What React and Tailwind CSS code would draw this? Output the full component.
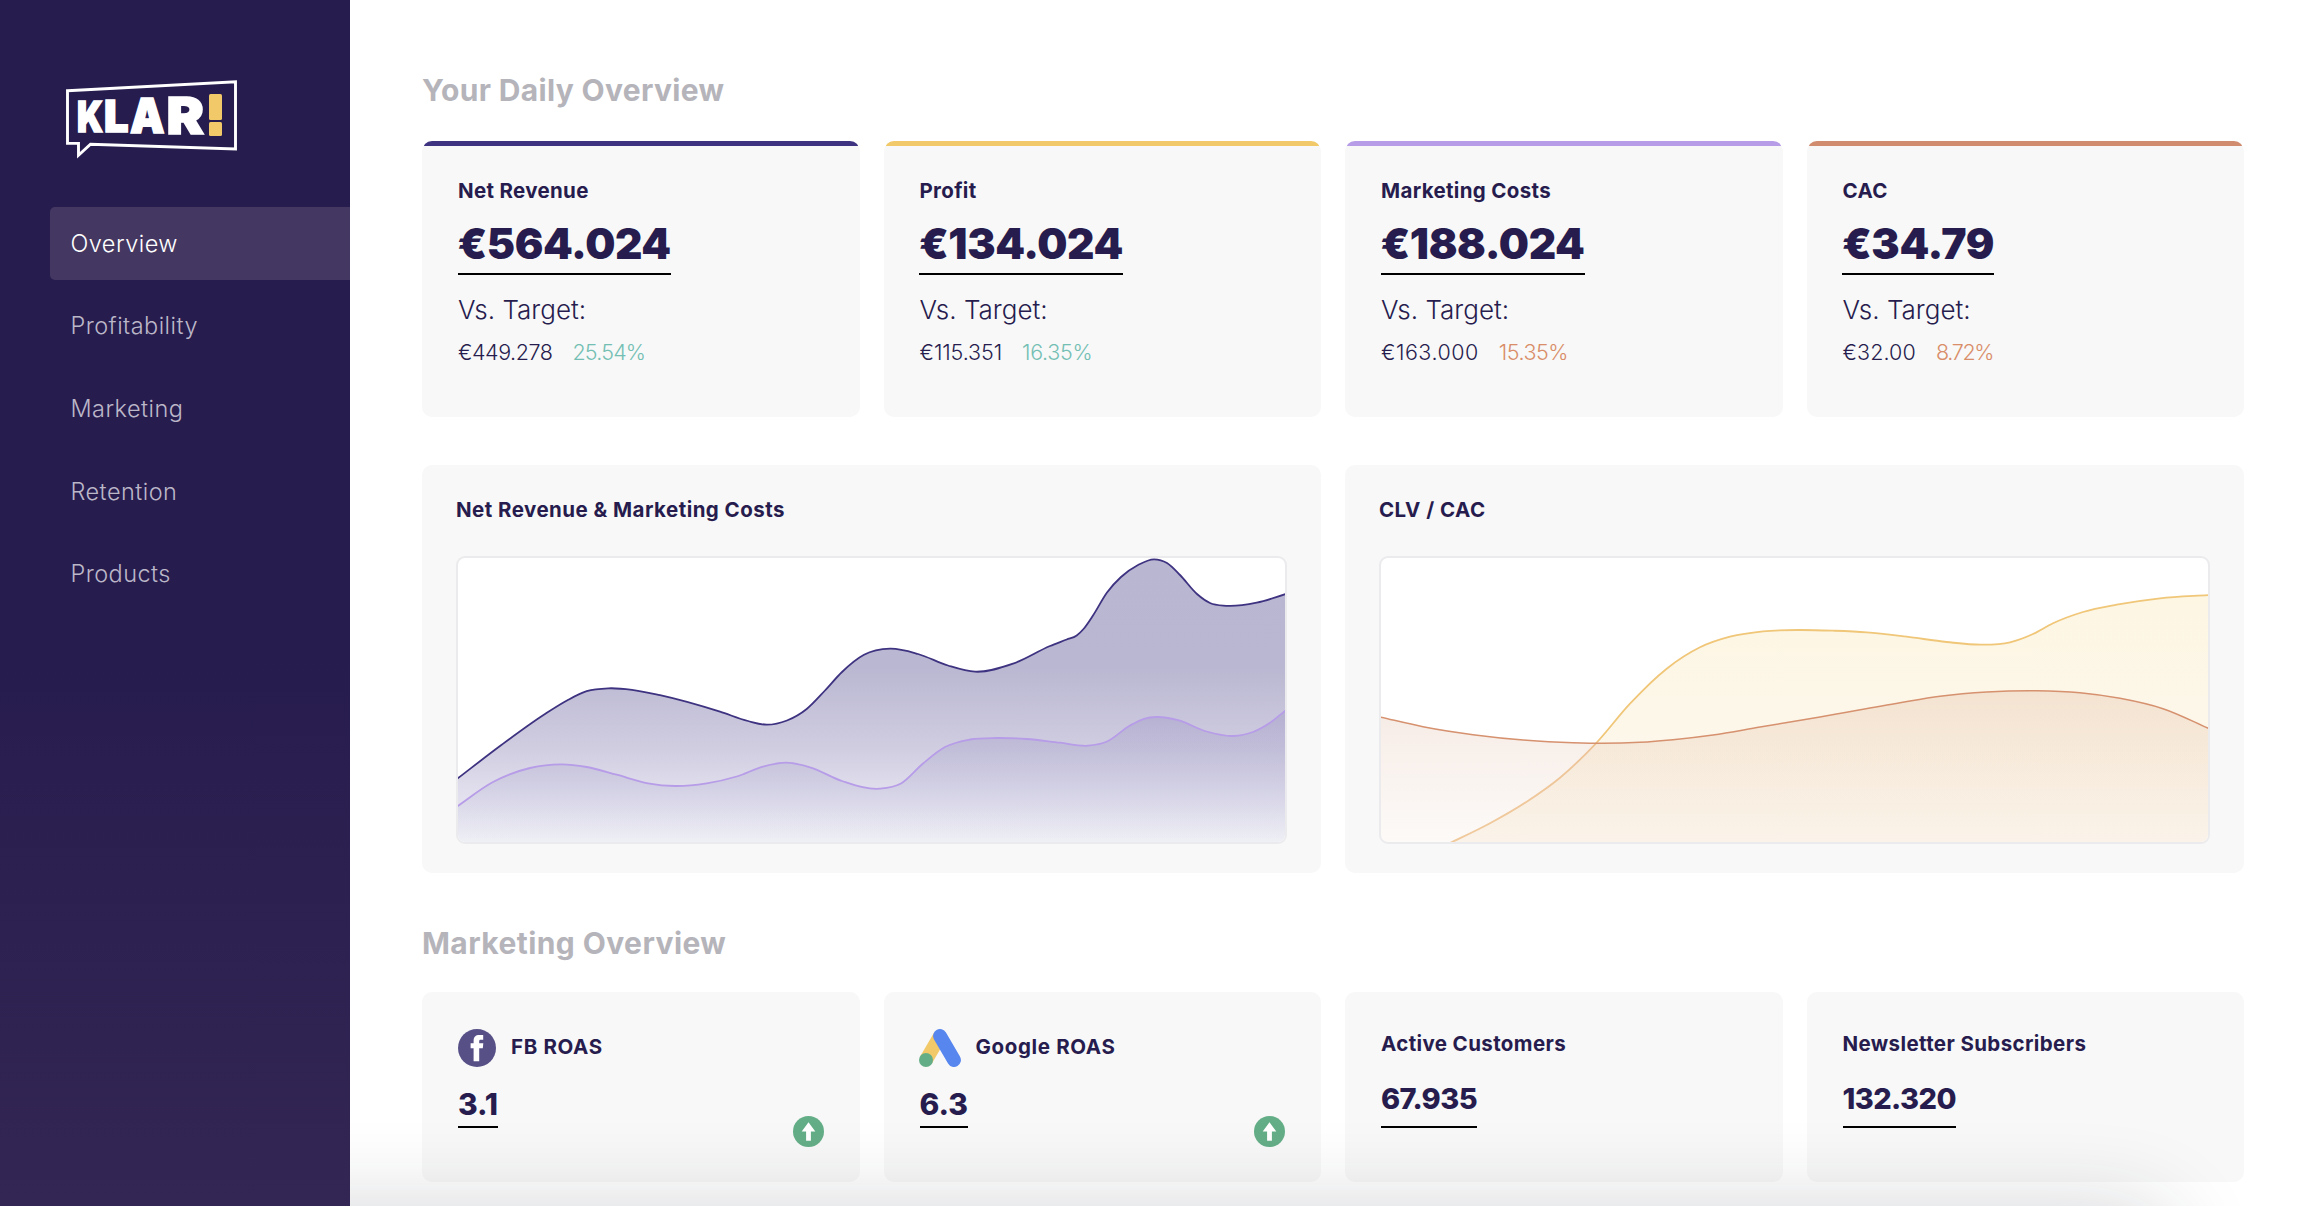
import React from 'react';
import clsx from 'clsx';

const navItems = ['Overview', 'Profitability', 'Marketing', 'Retention', 'Products'];

const dailyCards = [
  { title: 'Net Revenue', value: '€564.024', target: '€449.278', diff: '25.54%', good: true, bar: 'bg-[#3e3380]', targetTrack: 'tracking-[-0.45px]', diffTrack: 'tracking-[-0.8px]' },
  { title: 'Profit', value: '€134.024', target: '€115.351', diff: '16.35%', good: true, bar: 'bg-[#f2c968]', targetTrack: 'tracking-[-0.1px]', diffTrack: 'tracking-[-0.3px]' },
  { title: 'Marketing Costs', value: '€188.024', target: '€163.000', diff: '15.35%', good: false, bar: 'bg-[#b79ce8]', targetTrack: 'tracking-[0.5px]', diffTrack: 'tracking-[-0.5px]' },
  { title: 'CAC', value: '€34.79', target: '€32.00', diff: '8.72%', good: false, bar: 'bg-[#d18c70]', targetTrack: 'tracking-[0.1px]', diffTrack: 'tracking-[-1.3px]' },
];

const revenuePoints = [
  [457, 779], [500, 746], [545, 714], [567, 700.5], [586.7, 691.2], [608.3, 688.3], [632, 689.8], [660, 695.2], [720, 711.7], [748, 721], [766.7, 724.7],
  [787, 720.5], [806.7, 709], [825, 690.5], [842, 672], [864, 654.8], [890, 648.7], [918, 654], [948, 665.5], [975, 671.7], [1013, 663.7],
  [1050, 646], [1066.7, 639.5], [1076.7, 635.5], [1083.5, 629], [1093, 615.5], [1107, 592.5], [1121, 577], [1138, 565], [1154, 559.3],
  [1167, 563], [1180, 575], [1197, 594], [1210, 603], [1226, 605.8], [1256.7, 602.7], [1286, 594],
];

const costPoints = [
  [457, 806.5], [493, 782], [530, 768], [561.7, 764.3], [586.7, 767], [616.7, 774.7], [648, 783.3], [675, 786],
  [706.7, 783.3], [736.7, 776.5], [764, 766.3], [786, 762.7], [810, 767.3], [842, 781], [880, 788.7], [901, 783.5],
  [923, 763.5], [945, 747], [970, 739.5], [996.7, 738], [1026.7, 739], [1060, 742.7], [1088, 745.7], [1107, 741.5],
  [1130, 725.5], [1144, 718.8], [1156.7, 717], [1178, 720.2], [1206.7, 731.5], [1233, 736], [1253, 732], [1270, 722.8], [1286, 710],
];

const clvPoints = [
  [1446, 845], [1490, 823.3], [1526.7, 801.7], [1560, 777.7], [1596, 743.3], [1630, 703.7], [1666.7, 668.7],
  [1700, 647.3], [1730, 636.7], [1763, 631.3], [1800, 630], [1833, 630.7], [1866.7, 632.3], [1906.7, 636.7],
  [1946.7, 642], [1981.7, 644.7], [2010, 642.3], [2033, 634], [2053, 623.3], [2083, 612], [2116.7, 604.7],
  [2160, 598.3], [2210, 595],
];

const cacPoints = [
  [1380, 717], [1423, 726.7], [1473, 734.7], [1526.7, 740.3], [1573, 742.7], [1603, 743.3], [1640, 742.3],
  [1673, 739.7], [1713, 735], [1760, 727], [1820, 717], [1900, 702.7], [1940, 696.3],
  [1986.7, 692], [2036.7, 690.7], [2080, 692.7], [2120, 698.3], [2163, 708.7], [2210, 729],
];

// Smooth cubic curve through the points
const curve = (points) => {
  const step = points.slice(1).map(([x], i) => x - points[i][0]);
  const slope = points.slice(1).map(([, y], i) => (y - points[i][1]) / step[i]);
  const tangent = points.map((_, i) => {
    if (i === 0) return slope[0];
    if (i === points.length - 1) return slope[i - 1];
    return (slope[i - 1] * step[i] + slope[i] * step[i - 1]) / (step[i] + step[i - 1]);
  });
  return points.slice(1).reduce((d, [x, y], i) => {
    const [px, py] = points[i];
    const h = (x - px) / 3;
    return `${d} C${px + h} ${py + tangent[i] * h} ${x - h} ${y - tangent[i + 1] * h} ${x} ${y}`;
  }, `M${points[0][0]} ${points[0][1]}`);
};

const area = (points) =>
  `${curve(points)} L${points[points.length - 1][0]} 850 L${points[0][0]} 850 Z`;

const Logo = () => (
  <svg viewBox="64 78 176 84" className="ml-16 h-[84px] w-[176px]">
    <path
      d="M67.5 90.7 L235.5 81.7 V149 L90.5 144.2 L78.5 155.3 V143.4 H67.5 Z"
      fill="none"
      stroke="#fff"
      strokeWidth="2.9"
    />
    <text fill="#fff" stroke="#fff" strokeWidth="1.6" fontFamily="Inter, sans-serif" fontWeight="900">
      <tspan x="77" y="131.5" fontSize="42.5" textLength="26" lengthAdjust="spacingAndGlyphs">K</tspan>
      <tspan x="104" y="132" fontSize="44.5" textLength="24.5" lengthAdjust="spacingAndGlyphs">L</tspan>
      <tspan x="130" y="133" fontSize="48" textLength="34.5" lengthAdjust="spacingAndGlyphs">A</tspan>
      <tspan x="166.5" y="134" fontSize="51" textLength="37.5" lengthAdjust="spacingAndGlyphs">R</tspan>
    </text>
    <rect x="209" y="94" width="13" height="26" rx="1.5" fill="#f2c968" />
    <rect x="209" y="122" width="13" height="14" rx="1.5" fill="#f2c968" />
  </svg>
);

const FacebookIcon = () => (
  <svg viewBox="0 0 38 38" className="h-[38px] w-[38px]">
    <circle cx="19" cy="19" r="19" fill="#565087" />
    <path
      d="M15.6 32.3 V19.2 H12.6 V14.3 H15.6 V12 C15.6 7.8 17.6 6 21.4 6 H25.2 V10.7 H22.8 C21.4 10.7 21.2 11.4 21.2 12.4 V14.3 H25.3 L24.8 19.2 H21.2 V32.3 Z"
      fill="#fff"
    />
  </svg>
);

const GoogleAdsIcon = () => (
  <svg viewBox="0 0 42 38" className="-ml-px h-[38px] w-[42px]">
    <path d="M21 7 L7 31" stroke="#f2c968" strokeWidth="13.6" />
    <path d="M21 7 L35 31" stroke="#5686ee" strokeWidth="13.8" strokeLinecap="round" />
    <circle cx="7" cy="31" r="7" fill="#64ae87" />
  </svg>
);

const UpIcon = () => (
  <svg viewBox="0 0 31 31" className="absolute right-9 top-[124px] h-[31px] w-[31px]">
    <circle cx="15.5" cy="15.5" r="15.5" fill="#64ae87" />
    <path d="M15.5 6.3 L22.3 15.6 H17.9 V24.8 H13.1 V15.6 H8.7 Z" fill="#fff" />
  </svg>
);

const StatCard = ({ card }) => (
  <div className="flex h-[276px] flex-col items-start overflow-hidden rounded-[10px] bg-[#f8f8f8]">
    <div className="w-full px-[2px]">
      <div className={clsx('h-[5px] rounded-t-[7px]', card.bar)} />
    </div>
    <h3 className="ml-9 mt-[29px] text-[20.5px] font-bold leading-8 tracking-[0.33px]">{card.title}</h3>
    <p className="ml-[35.5px] mt-[12px] h-[56px] border-b-2 border-black text-[42.5px] font-black leading-[50px] tracking-[-0.4px]">
      {card.value}
    </p>
    <p className="ml-9 mt-[17px] text-[26px] font-light leading-9">Vs. Target:</p>
    <p className="ml-9 mt-[10px] flex gap-5 text-[21.5px] font-light leading-7">
      <span className={card.targetTrack}>{card.target}</span>
      <span className={clsx(card.diffTrack, card.good ? 'text-[#74bfb4]' : 'text-[#d98d68]')}>{card.diff}</span>
    </p>
  </div>
);

const ChartCard = ({ title, children, viewBox }) => (
  <div className="h-[408px] rounded-[10px] bg-[#f8f8f8] px-[34px] pt-[29px]">
    <h3 className="h-8 text-[20.5px] font-bold leading-8 tracking-[0.46px]">{title}</h3>
    <div className="mt-[30px] h-[288px] overflow-hidden rounded-[9px] border-2 border-[#ebebed] bg-white">
      <svg viewBox={viewBox} preserveAspectRatio="none" className="h-full w-full">
        {children}
      </svg>
    </div>
  </div>
);

const SmallCard = ({ title, value, icon, trend }) => (
  <div className="relative flex h-[190px] flex-col items-start rounded-[10px] bg-[#f8f8f8] pl-9">
    {icon ? (
      <div className="mt-[37px] flex h-[38px] items-center gap-[15px]">
        {icon}
        <h3 className="-mt-[2px] text-[20.5px] font-bold leading-8 tracking-[0.65px]">{title}</h3>
      </div>
    ) : (
      <h3 className="mt-[36px] h-8 text-[20.5px] font-bold leading-8 tracking-[0.38px]">{title}</h3>
    )}
    <p
      className={clsx(
        'border-b-2 border-black font-extrabold leading-[36px]',
        icon ? 'mt-[19px] h-[42px] text-[30px] tracking-[-0.1px]' : 'mt-[21px] h-[47px] text-[29px] tracking-[-0.6px]'
      )}
    >
      {value}
    </p>
    {trend && <UpIcon />}
  </div>
);

const App = () => {
  return (
    <div className="flex h-[1206px] w-[2320px] overflow-hidden bg-white font-[Inter,sans-serif] text-[#271c4e]">
      {/* Sidebar */}
      <aside className="z-10 w-[350px] shrink-0 bg-linear-to-b from-[#271c4e] from-55% to-[#332654] pt-[78px]">
        <Logo />
        <nav className="mt-[45px] flex flex-col gap-[9.6px] pl-[50px]">
          {navItems.map((item, i) => (
            <a
              key={item}
              className={clsx(
                'flex h-[73px] items-center rounded-l-[5px] pl-[20.5px] text-[23.5px] font-light tracking-[0.45px]',
                i === 0 ? 'bg-[#443862] text-white' : 'text-[#bbb7c8]'
              )}
            >
              {item}
            </a>
          ))}
        </nav>
      </aside>

      <main className="relative flex-1 overflow-hidden pl-[72px] pr-[76px]">
        <h2 className="mt-[70px] h-10 text-[30px] font-bold leading-10 tracking-[0.33px] text-[#b5b4ba]">Your Daily Overview</h2>
        <div className="mt-[31px] grid grid-cols-4 gap-6">
          {dailyCards.map((card) => (
            <StatCard key={card.title} card={card} />
          ))}
        </div>

        {/* Charts */}
        <div className="mt-12 grid grid-cols-2 gap-6">
          <ChartCard title="Net Revenue & Marketing Costs" viewBox="458 558 827 284">
            <defs>
              <linearGradient id="revenue" gradientUnits="userSpaceOnUse" x1="0" y1="558" x2="0" y2="842">
                <stop offset="0" stopColor="#b8b6d1" />
                <stop offset="0.38" stopColor="#b9b7d1" />
                <stop offset="0.67" stopColor="#d0cde1" />
                <stop offset="0.85" stopColor="#e4e1ef" />
                <stop offset="1" stopColor="#f5f5f9" />
              </linearGradient>
              <linearGradient id="costs" gradientUnits="userSpaceOnUse" x1="0" y1="710" x2="0" y2="842">
                <stop offset="0" stopColor="#8f82bd" stopOpacity="0.3" />
                <stop offset="1" stopColor="#8f9abd" stopOpacity="0.06" />
              </linearGradient>
            </defs>
            <path d={area(revenuePoints)} fill="url(#revenue)" />
            <path d={curve(revenuePoints)} fill="none" stroke="#3e3380" strokeWidth="1.8" />
            <path d={area(costPoints)} fill="url(#costs)" />
            <path d={curve(costPoints)} fill="none" stroke="#b79ce8" strokeWidth="1.8" />
          </ChartCard>

          <ChartCard title="CLV / CAC" viewBox="1381 558 827 284">
            <defs>
              <linearGradient id="clv" gradientUnits="userSpaceOnUse" x1="0" y1="595" x2="0" y2="842">
                <stop offset="0" stopColor="#fdf6e3" />
                <stop offset="1" stopColor="#fdf8f0" />
              </linearGradient>
              <linearGradient id="clvLine" gradientUnits="userSpaceOnUse" x1="0" y1="738" x2="0" y2="748">
                <stop offset="0" stopColor="#f0c678" />
                <stop offset="1" stopColor="#f2cc9f" />
              </linearGradient>
              <linearGradient id="cac" gradientUnits="userSpaceOnUse" x1="0" y1="690" x2="0" y2="842">
                <stop offset="0" stopColor="#cd8d6c" stopOpacity="0.19" />
                <stop offset="1" stopColor="#cd966c" stopOpacity="0.05" />
              </linearGradient>
            </defs>
            <path d={area(clvPoints)} fill="url(#clv)" />
            <path d={curve(clvPoints)} fill="none" stroke="url(#clvLine)" strokeWidth="1.8" />
            <path d={area(cacPoints)} fill="url(#cac)" />
            <path d={curve(cacPoints)} fill="none" stroke="#d6916f" strokeWidth="1.5" />
          </ChartCard>
        </div>

        <h2 className="mt-[50px] h-10 text-[30px] font-bold leading-10 tracking-[0.42px] text-[#b5b4ba]">Marketing Overview</h2>
        <div className="mt-[29px] grid grid-cols-4 gap-6">
          <SmallCard title="FB ROAS" value="3.1" icon={<FacebookIcon />} trend />
          <SmallCard title="Google ROAS" value="6.3" icon={<GoogleAdsIcon />} trend />
          <SmallCard title="Active Customers" value="67.935" />
          <SmallCard title="Newsletter Subscribers" value="132.320" />
        </div>

        {/* Shadow cast from below the fold */}
        <div className="absolute -left-40 right-[150px] top-[1210px] h-40 rounded-[40px] shadow-[0_0_90px_rgba(30,35,50,0.2)]" />
      </main>
    </div>
  );
};

export default App;
